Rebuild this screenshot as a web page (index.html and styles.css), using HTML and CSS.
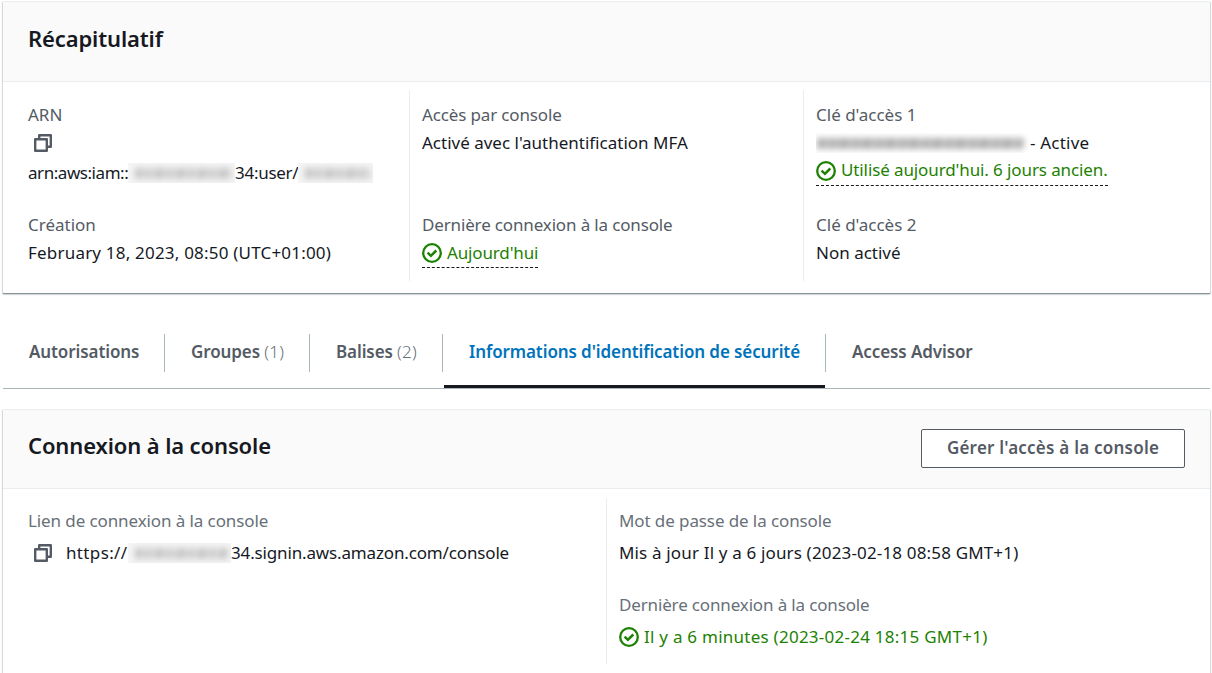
FILE: index.html
```html
<!DOCTYPE html>
<html lang="fr">
<head>
<meta charset="utf-8">
<title>Récapitulatif</title>
<link rel="stylesheet" href="styles.css">
</head>
<body>
<svg class="defs" aria-hidden="true">
  <symbol id="copy" viewBox="0 0 20 20"><path d="M2.2 6.2h11.6v11.6H2.2zM6.2 6V2.2h11.6v11.6H14" fill="none" stroke="currentColor" stroke-width="2.4" stroke-linejoin="round"/></symbol>
  <symbol id="ok" viewBox="0 0 20 20"><circle cx="10" cy="10" r="8.8" fill="none" stroke="currentColor" stroke-width="2.3"/><path d="M5.6 9.7l3.3 3.1 5.4-5.3" fill="none" stroke="currentColor" stroke-width="2.5"/></symbol>
</svg>
<main class="page">
  <section class="card">
    <header class="card-head"><h2>Récapitulatif</h2></header>
    <div class="grid three">
      <div class="col">
        <div class="field first">
          <div class="label">ARN</div>
          <div class="line"><svg class="copy"><use href="#copy"/></svg></div>
          <div class="line arn"><span class="arn-start">arn:aws:iam::</span><span class="mask account"><i></i></span><span class="arn-user">34:user/</span><span class="mask user"><i></i></span></div>
        </div>
        <div class="field">
          <div class="label">Création</div>
          <div class="line wide">February 18, 2023, 08:50 (UTC+01:00)</div>
        </div>
      </div>
      <div class="col">
        <div class="field first">
          <div class="label tight">Accès par console</div>
          <div class="line">Activé avec l'authentification MFA</div>
        </div>
        <div class="field">
          <div class="label tight">Dernière connexion à la console</div>
          <div class="line"><span class="status dashed tight"><svg class="ok"><use href="#ok"/></svg>Aujourd'hui</span></div>
        </div>
      </div>
      <div class="col">
        <div class="field first">
          <div class="label">Clé d'accès 1</div>
          <div class="line wide"><span class="mask key"><i></i></span>- Active</div>
          <div class="line"><span class="status dashed key-use"><svg class="ok"><use href="#ok"/></svg><span>Utilisé aujourd'hui. 6 jours ancien.</span></span></div>
        </div>
        <div class="field">
          <div class="label">Clé d'accès 2</div>
          <div class="line">Non activé</div>
        </div>
      </div>
    </div>
  </section>
  <nav class="tabs">
    <a class="tab tab-permissions">Autorisations</a>
    <a class="tab tab-groups">Groupes <span class="count">(1)</span></a>
    <a class="tab tab-tags">Balises <span class="count">(2)</span></a>
    <a class="tab tab-security active">Informations d'identification de sécurité</a>
    <a class="tab tab-advisor">Access Advisor</a>
  </nav>
  <section class="card second">
    <header class="card-head"><h2>Connexion à la console</h2><button class="btn">Gérer l'accès à la console</button></header>
    <div class="grid two">
      <div class="col">
        <div class="label link-label">Lien de connexion à la console</div>
        <div class="line"><svg class="copy"><use href="#copy"/></svg><span class="scheme">https://</span><span class="mask host"><i></i></span><span class="tight">34.signin.aws.amazon.com/console</span></div>
      </div>
      <div class="col">
        <div class="label link-label">Mot de passe de la console</div>
        <div class="line updated">Mis à jour Il y a 6 jours (2023-02-18 08:58 GMT+1)</div>
        <div class="label tight next">Dernière connexion à la console</div>
        <div class="line"><span class="status last-login"><svg class="ok"><use href="#ok"/></svg>Il y a 6 minutes (2023-02-24 18:15 GMT+1)</span></div>
      </div>
    </div>
  </section>
</main>
</body>
</html>
```
FILE: styles.css
```css
* { box-sizing: border-box; }
body { margin: 0; background: #fff; color: #16191f; font: 17px/28px "Noto Sans", sans-serif; overflow: hidden; }
.defs { position: absolute; width: 0; height: 0; }
.page { display: flex; flex-direction: column; padding: 1px 1px 0 2px; }

.card { height: 293px; background: #fff; border: 1px solid #d5dbdb; border-top-color: #eaeded; border-bottom-color: #879596; border-radius: 2px; box-shadow: 0 1px 1px rgba(0, 28, 36, .2); }
.card-head { display: flex; align-items: center; justify-content: space-between; height: 80px; padding: 0 25px; background: #fafafa; border-bottom: 1px solid #eaeded; }
h2 { margin: 0; padding-bottom: 8px; font-size: 22px; line-height: 28px; font-weight: 600; letter-spacing: -.12px; }

.grid { display: grid; padding-top: 8px; }
.three { grid-template-columns: 406px 394px 1fr; }
.col { padding: 11px 0 0 25px; white-space: nowrap; }
.three .col { height: 191px; }
.col + .col { border-left: 1px solid #eaeded; padding-left: 12px; }
.field.first { height: 110px; }
.label { height: 28px; color: #545b64; }
.line { display: flex; align-items: center; height: 28px; }

.tight { letter-spacing: -.15px; }
.wide { letter-spacing: .2px; }
.arn { padding-top: 3px; }
.arn-start { width: 100px; letter-spacing: -.45px; }
.arn-user { width: 63px; letter-spacing: -.28px; }
.key-use { letter-spacing: -.11px; }
.key-use span { margin-top: -2px; }
.link-label { letter-spacing: -.1px; }
.updated { letter-spacing: .16px; }
.last-login { letter-spacing: .25px; }

.copy { flex: none; width: 20px; height: 20px; margin-left: 5px; color: #545b64; }
.ok { flex: none; width: 20px; height: 20px; }
.status { display: inline-flex; align-items: center; gap: 5px; height: 30px; color: #1d8102; }
.dashed { border-bottom: 1px dashed #16191f; }

/* Redacted values */
.mask { flex: none; height: 20px; overflow: hidden; background: #f5f5f5; }
.mask i { display: block; height: 11px; margin: 5px 3px 4px 7px; filter: blur(3px); background: repeating-linear-gradient(100deg, #c4c4c4 0 8px, #e2e2e2 8px 11px, #cacaca 11px 17px, #dedede 17px 21px); }
.account { width: 107px; }
.user { width: 75px; }
.key { width: 214px; background: none; }
.key i { margin: 5px 6px 4px 1px; background: repeating-linear-gradient(100deg, #adadad 0 9px, #cecece 9px 12px, #b2b2b2 12px 20px, #c8c8c8 20px 23px); }
.host { width: 103px; }

.tabs { display: flex; height: 55px; margin: 40px 1px 0 1px; border-bottom: 1px solid #aab7b8; }
.tab { height: 38px; padding-left: 26px; border-right: 1px solid #aab7b8; color: #545b64; font-weight: 600; line-height: 36px; letter-spacing: -.1px; white-space: nowrap; }
.tab-permissions { width: 162px; }
.tab-groups { width: 145px; }
.tab-tags { width: 133px; }
.tab-security { position: relative; width: 383px; }
.tab-advisor { border: 0; }
.count { color: #687078; font-weight: 300; letter-spacing: .2px; }
.active { color: #0073bb; }
.active::after { content: ""; position: absolute; left: 1px; right: 0; bottom: -16px; height: 3px; background: #16191f; }

.second { margin-top: 20px; }
.second .card-head { height: 79px; padding-bottom: 2px; }
.second h2 { padding-bottom: 7px; }
.btn { width: 264px; height: 39px; padding: 0; border: 1px solid #545b64; border-radius: 2px; background: #fff; color: #545b64; font: 600 17px/28px "Noto Sans", sans-serif; letter-spacing: .23px; }
.two { grid-template-columns: 603px 1fr; padding-top: 9px; }
.two .col { height: 166px; padding-top: 9px; }
.two .label { height: 32px; color: #687078; }
.two .next { margin-top: 24px; }
.scheme { width: 75px; padding-left: 13px; letter-spacing: .35px; }
```
